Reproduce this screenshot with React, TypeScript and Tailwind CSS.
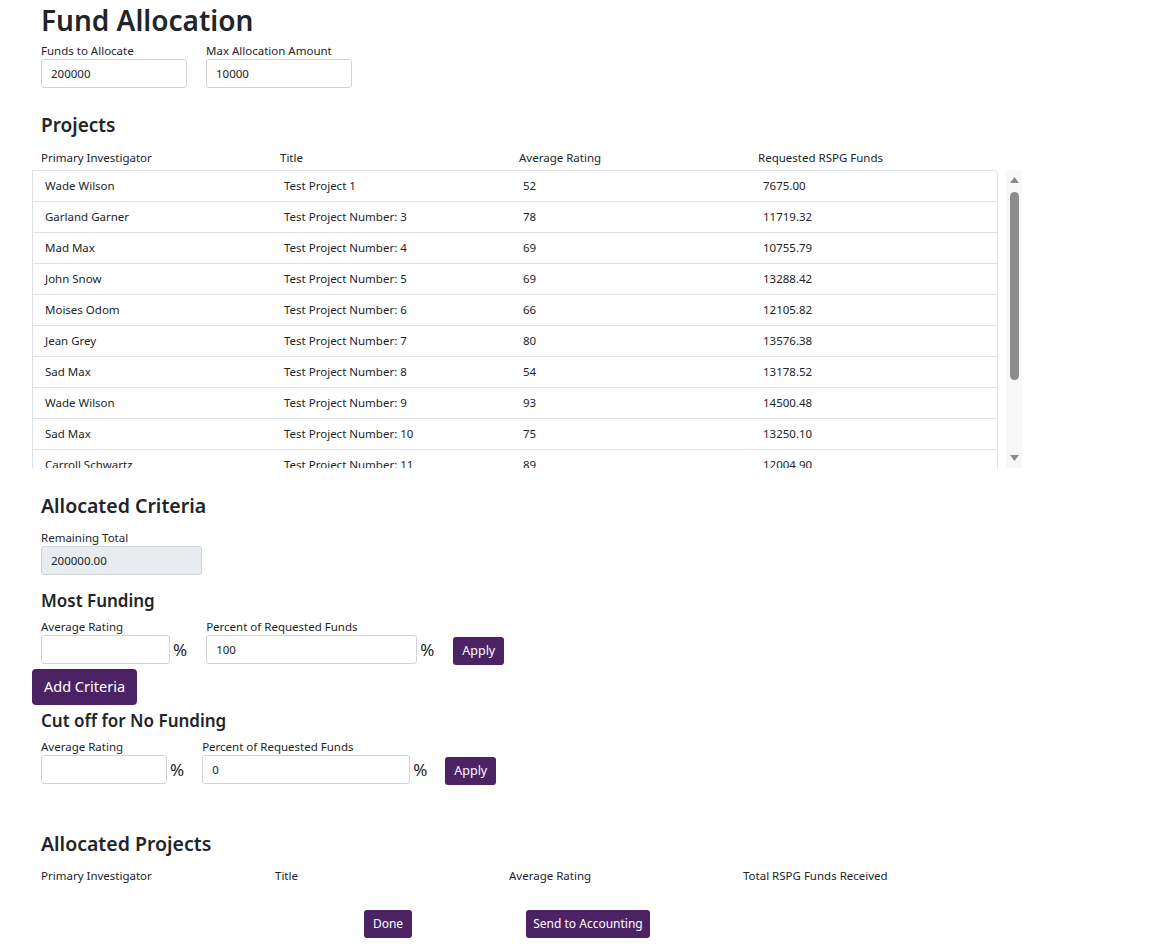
const projects = [
  { pi: "Wade Wilson", title: "Test Project 1", rating: 52, funds: "7675.00" },
  { pi: "Garland Garner", title: "Test Project Number: 3", rating: 78, funds: "11719.32" },
  { pi: "Mad Max", title: "Test Project Number: 4", rating: 69, funds: "10755.79" },
  { pi: "John Snow", title: "Test Project Number: 5", rating: 69, funds: "13288.42" },
  { pi: "Moises Odom", title: "Test Project Number: 6", rating: 66, funds: "12105.82" },
  { pi: "Jean Grey", title: "Test Project Number: 7", rating: 80, funds: "13576.38" },
  { pi: "Sad Max", title: "Test Project Number: 8", rating: 54, funds: "13178.52" },
  { pi: "Wade Wilson", title: "Test Project Number: 9", rating: 93, funds: "14500.48" },
  { pi: "Sad Max", title: "Test Project Number: 10", rating: 75, funds: "13250.10" },
  { pi: "Carroll Schwartz", title: "Test Project Number: 11", rating: 89, funds: "12004.90" },
  { pi: "Jean Grey", title: "Test Project Number: 12", rating: 71, funds: "11890.00" },
];

const font = { fontFamily: '"Noto Sans", "Open Sans", sans-serif' };

function Field({
  label,
  value,
  width,
  disabled,
}: {
  label: string;
  value: string;
  width: string;
  disabled?: boolean;
}) {
  return (
    <div className="flex flex-col">
      <label className="text-[11.5px] leading-[16px] text-[#212529]">{label}</label>
      <input
        readOnly
        value={value}
        className={`${width} h-[29px] rounded-[3px] border border-[#ced4da] px-[9px] text-[11.5px] text-[#212529] outline-none ${
          disabled ? "bg-[#e9ecef]" : "bg-white"
        }`}
      />
    </div>
  );
}

function Criteria({
  title,
  pct,
  w1,
  w2,
  gap,
  applyGap,
}: {
  title: string;
  pct: string;
  w1: string;
  w2: string;
  gap: string;
  applyGap: string;
}) {
  return (
    <div className="pl-[9px]">
      <h4 className="text-[17px] font-semibold leading-[24px] text-[#212529]">{title}</h4>
      <div className="mt-[6px] flex items-end">
        <div className="flex flex-col">
          <label className="text-[11.5px] leading-[16px] text-[#212529]">Average Rating</label>
          <div className="flex items-center">
            <input readOnly value="" className={`${w1} h-[29px] rounded-[3px] border border-[#ced4da] bg-white px-[9px] text-[11.5px] outline-none`} />
            <span className="ml-[3px] text-[17px] leading-none text-[#212529]">%</span>
          </div>
        </div>
        <div className={`flex flex-col ${gap}`}>
          <label className="text-[11.5px] leading-[16px] text-[#212529]">Percent of Requested Funds</label>
          <div className="flex items-center">
            <input readOnly value={pct} className={`${w2} h-[29px] rounded-[3px] border border-[#ced4da] bg-white px-[9px] text-[11.5px] text-[#212529] outline-none`} />
            <span className="ml-[3px] text-[17px] leading-none text-[#212529]">%</span>
          </div>
        </div>
        <button className={`mb-[-1px] ${applyGap} h-[28px] rounded-[3px] bg-[#4b2263] px-[9px] text-[12.5px] text-white`}>
          Apply
        </button>
      </div>
    </div>
  );
}

export default function App() {
  return (
    <div className="min-h-[946px] bg-white pl-[32px] text-[#212529]" style={font}>
      <div className="pl-[9px]">
        <h1 className="pt-[1px] text-[28px] font-semibold leading-[38px]">Fund Allocation</h1>
        <div className="mt-[4px] flex gap-[19px]">
          <Field label="Funds to Allocate" value="200000" width="w-[146px]" />
          <Field label="Max Allocation Amount" value="10000" width="w-[146px]" />
        </div>
        <h3 className="mt-[23px] text-[19px] font-semibold leading-[28px]">Projects</h3>
        <div className="mt-[11px] grid w-[956px] grid-cols-4 text-[11.5px] leading-[16px]">
          <div>Primary Investigator</div>
          <div>Title</div>
          <div>Average Rating</div>
          <div>Requested RSPG Funds</div>
        </div>
      </div>

      <div className="mt-[4px] flex">
        <div className="h-[298px] w-[966px] overflow-hidden rounded-tr-[4px] border-t border-r border-l border-[#dee2e6]">
          {projects.map((p, i) => (
            <div
              key={i}
              className="grid h-[31px] grid-cols-4 items-center border-b border-[#dee2e6] pl-[12px] text-[11.5px]"
            >
              <div>{p.pi}</div>
              <div className="pl-[1px]">{p.title}</div>
              <div className="pl-[2px]">{p.rating}</div>
              <div className="pl-[4px]">{p.funds}</div>
            </div>
          ))}
        </div>
        <div className="ml-[8px] flex h-[298px] w-[16px] flex-col items-center bg-[#f8f8f8] pt-[7px]">
          <svg width="9" height="6" viewBox="0 0 9 6">
            <path d="M4.5 0L9 6H0z" fill="#8a8a8a" />
          </svg>
          <div className="mt-[9px] h-[188px] w-[9px] rounded-full bg-[#8c8c8c]" />
          <div className="flex-1" />
          <svg width="9" height="6" viewBox="0 0 9 6" className="mb-[7px]">
            <path d="M0 0H9L4.5 6z" fill="#8a8a8a" />
          </svg>
        </div>
      </div>

      <div className="pl-[9px]">
        <h3 className="mt-[24px] text-[19.5px] font-semibold leading-[28px]">Allocated Criteria</h3>
        <div className="mt-[10px]">
          <Field label="Remaining Total" value="200000.00" width="w-[161px]" disabled />
        </div>
      </div>

      <div className="mt-[14px]">
        <Criteria
          title="Most Funding"
          pct="100"
          w1="w-[129px]"
          w2="w-[211px]"
          gap="ml-[19px]"
          applyGap="ml-[19px]"
        />
      </div>

      <button className="mt-[5px] h-[36px] rounded-[4px] bg-[#4b2263] px-[12px] text-[14.5px] text-white">
        Add Criteria
      </button>

      <div className="mt-[4px]">
        <Criteria
          title="Cut off for No Funding"
          pct="0"
          w1="w-[126px]"
          w2="w-[208px]"
          gap="ml-[18px]"
          applyGap="ml-[18px]"
        />
      </div>

      <div className="pl-[9px]">
        <h3 className="mt-[46px] text-[19.5px] font-semibold leading-[28px]">Allocated Projects</h3>
        <div className="mt-[10px] grid w-[936px] grid-cols-4 text-[11.5px] leading-[16px]">
          <div>Primary Investigator</div>
          <div>Title</div>
          <div>Average Rating</div>
          <div>Total RSPG Funds Received</div>
        </div>
        <div className="mt-[26px] flex">
          <button className="ml-[323px] h-[28px] w-[48px] rounded-[3px] bg-[#4b2263] text-[12px] text-white">
            Done
          </button>
          <button className="ml-[114px] h-[28px] w-[124px] rounded-[3px] bg-[#4b2263] text-[12px] text-white">
            Send to Accounting
          </button>
        </div>
      </div>
    </div>
  );
}
